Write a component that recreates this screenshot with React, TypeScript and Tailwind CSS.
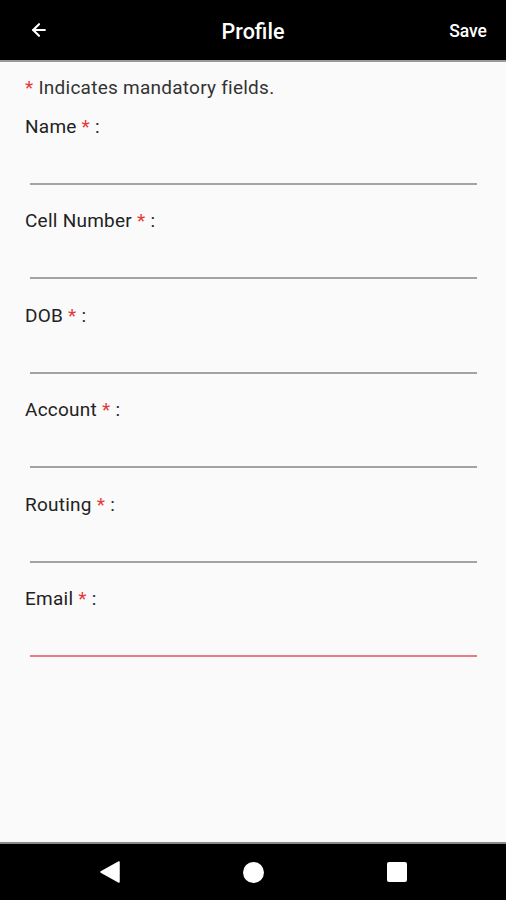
import { ArrowLeft } from "lucide-react";

const fields = ["Name", "Cell Number", "DOB", "Account", "Routing", "Email"];

export default function App() {
  return (
    <div className="flex h-[900px] w-[506px] flex-col bg-[#fafafa] font-['Roboto',sans-serif] text-[#222]">
      {/* app bar */}
      <div className="flex h-[62px] shrink-0 items-center border-b-2 border-[#9a9a9a] bg-black text-white">
        <div className="flex w-[80px] items-center pl-[29px]">
          <ArrowLeft size={20} strokeWidth={2.6} />
        </div>
        <div className="flex-1 pt-[4px] text-center text-[21.5px] font-medium">Profile</div>
        <div className="flex w-[80px] justify-end pr-[19px] pt-[3px] text-[17.5px] font-medium">Save</div>
      </div>

      <div className="flex-1 pl-[25px] pr-[29px] pt-[14px] tracking-[0.25px]">
        <p className="text-[19px] leading-6 text-[#333]">
          <span className="text-[#e53935]">*</span> Indicates mandatory fields.
        </p>
        <div className="mt-[15px] flex flex-col">
          {fields.map((f, i) => (
            <div key={f} className="mb-[24.4px]">
              <label className="block text-[19px] leading-6 text-[#222]">
                {f} <span className="text-[#e53935]">*</span> :
              </label>
              <div
                className={
                  "ml-[5px] h-[46px] border-b-2 " +
                  (i === fields.length - 1 ? "border-[#e57a89]" : "border-[#a3a3a3]")
                }
              />
            </div>
          ))}
        </div>
      </div>

      {/* android nav bar */}
      <div className="flex h-[58px] shrink-0 items-center border-t-2 border-[#8a8a8a] bg-black">
        <div className="flex w-full items-center justify-center gap-[123px]">
          <svg width="20" height="22" viewBox="0 0 20 22">
            <path d="M19 1 L1 11 L19 21 Z" fill="white" stroke="white" strokeWidth="1.5" strokeLinejoin="round" />
          </svg>
          <div className="h-[21px] w-[21px] rounded-full bg-white" />
          <div className="h-[20px] w-[20px] rounded-[2px] bg-white" />
        </div>
      </div>
    </div>
  );
}
